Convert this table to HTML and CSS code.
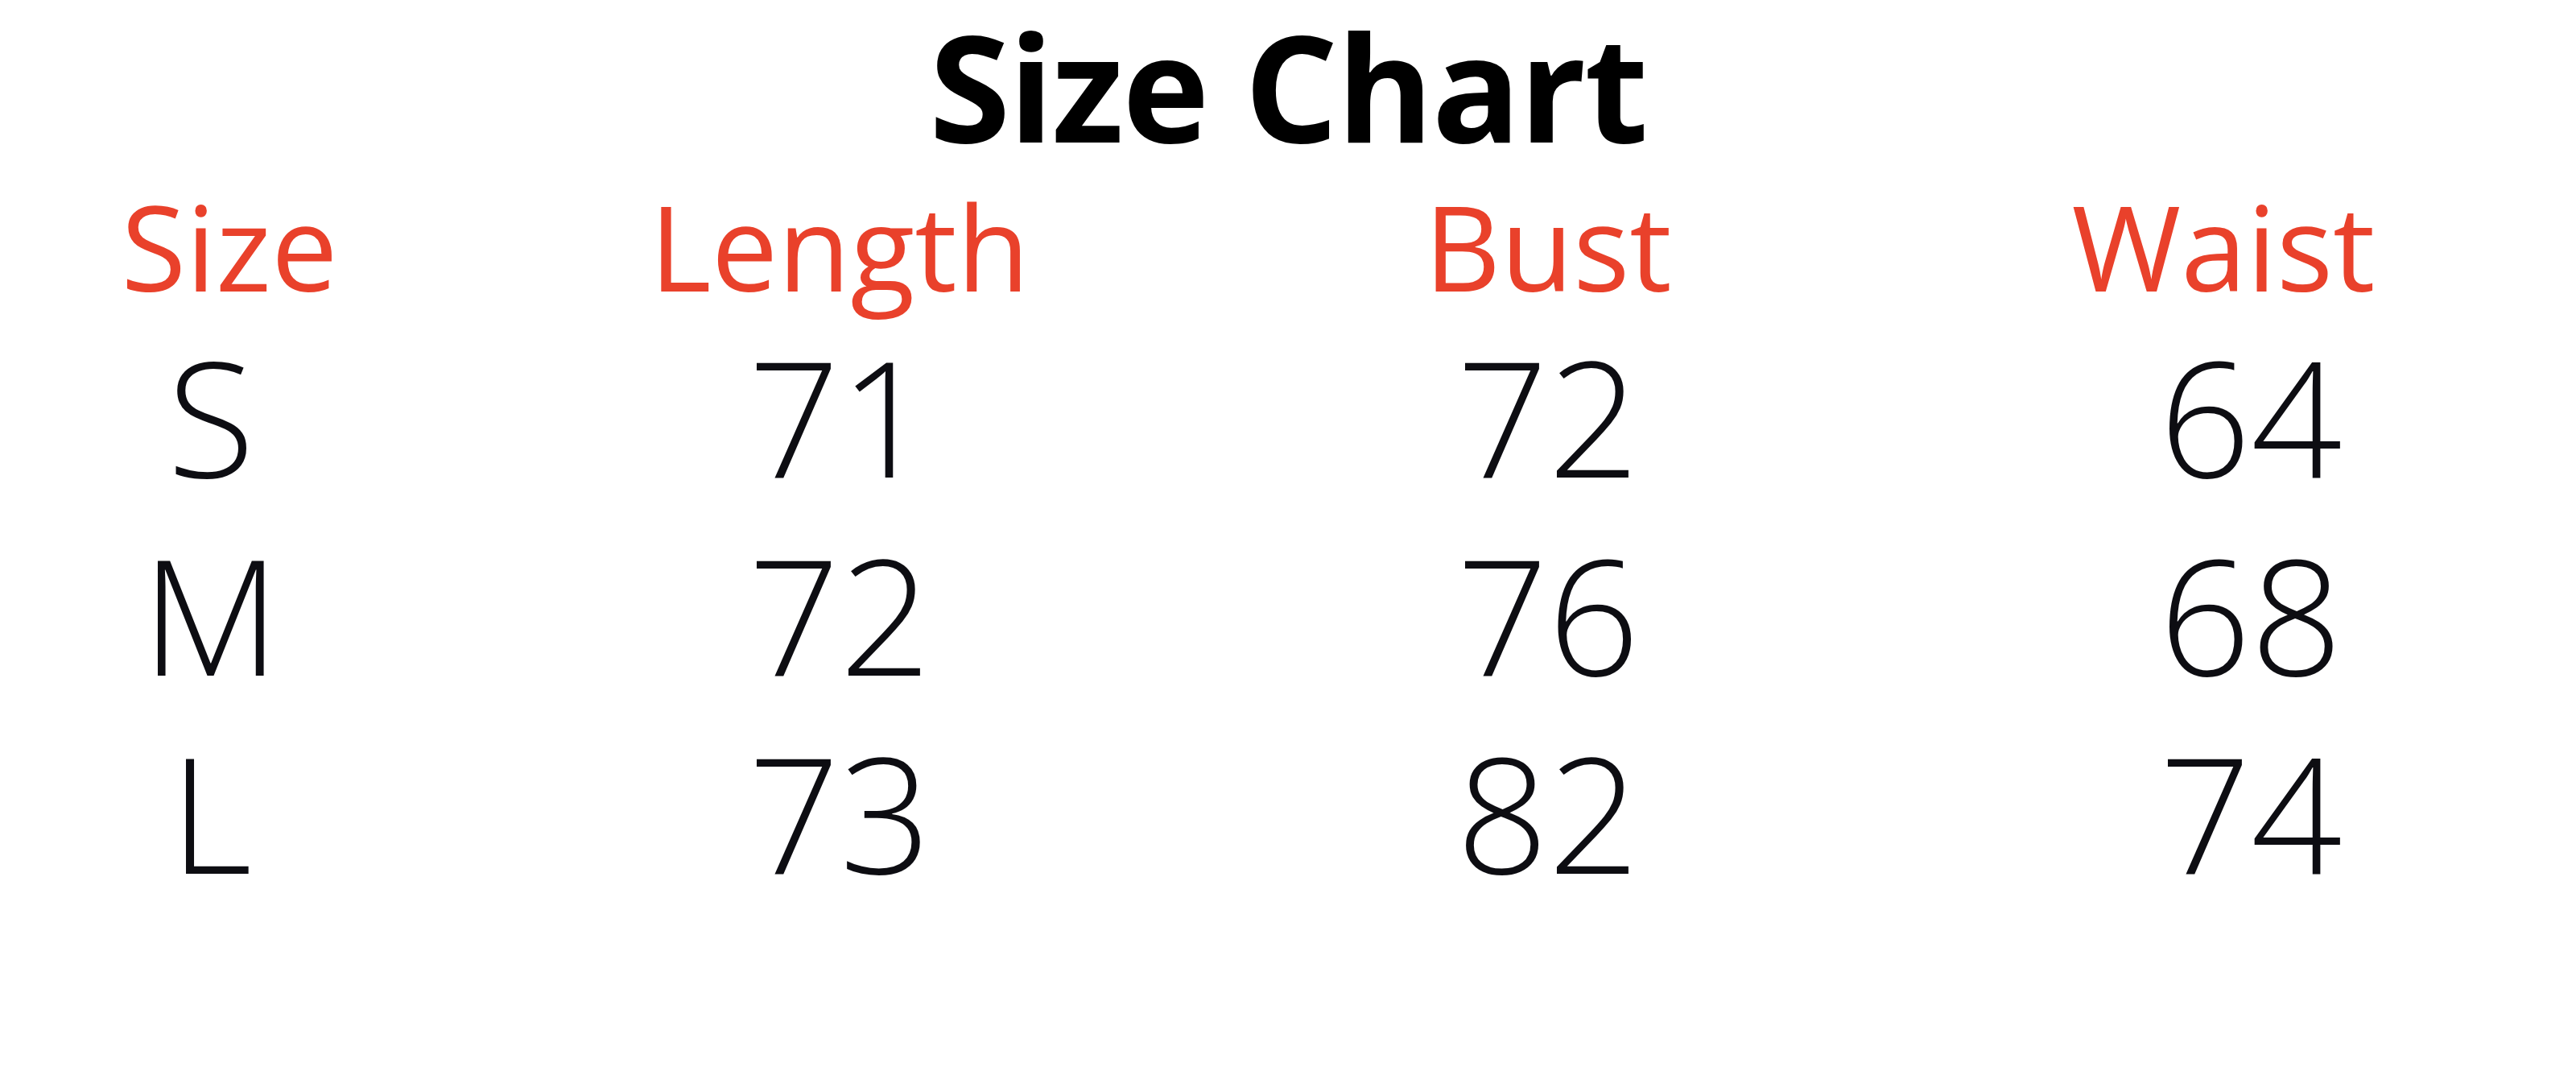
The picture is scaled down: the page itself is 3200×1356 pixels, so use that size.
FILE: index.html
```html
<!DOCTYPE html>
<html lang="en">
<head>
<meta charset="utf-8">
<title>Size Chart</title>
<link rel="stylesheet" href="styles.css">
</head>
<body>
<main class="chart">
  <h1 class="title">Size Chart</h1>
  <div class="grid">
    <div class="cell head c1">Size</div>
    <div class="cell head c2">Length</div>
    <div class="cell head c3">Bust</div>
    <div class="cell head c4">Waist</div>

    <div class="cell val c1">S</div>
    <div class="cell val c2">71</div>
    <div class="cell val c3">72</div>
    <div class="cell val c4">64</div>

    <div class="cell val c1">M</div>
    <div class="cell val c2">72</div>
    <div class="cell val c3">76</div>
    <div class="cell val c4">68</div>

    <div class="cell val c1">L</div>
    <div class="cell val c2">73</div>
    <div class="cell val c3">82</div>
    <div class="cell val c4">74</div>
  </div>
</main>
</body>
</html>
```

FILE: styles.css
```css
html, body {
  margin: 0;
  padding: 0;
  background: #ffffff;
}

body {
  width: 3200px;
  height: 1356px;
  overflow: hidden;
  font-family: "Open Sans", "Noto Sans", "DejaVu Sans", sans-serif;
  color: #111111;
}

.chart {
  display: flex;
  flex-direction: column;
  padding-top: 15px;
}

.title {
  margin: 0;
  font-family: "Open Sans", "Noto Sans", sans-serif;
  font-weight: 700;
  font-size: 183px;
  line-height: 183px;
  text-align: center;
  color: #000000;
  letter-spacing: -2px;
}

.grid {
  display: grid;
  grid-template-columns: 540px 1006px 754px 900px;
  grid-template-rows: 147px 246px 246px 246px;
  row-gap: 0;
  margin-top: 34px;
}

.cell {
  text-align: center;
  white-space: nowrap;
}

.head {
  font-size: 147px;
  line-height: 147px;
  font-weight: 400;
  color: #e9412b;
  margin-bottom: 14px;
}

.val {
  font-size: 199px;
  line-height: 246px;
  font-weight: 300;
  color: #0d0d12;
}

.grid .head {
  margin-bottom: 0;
}

.grid {
  grid-template-rows: 161px 246px 246px 246px;
}

.head.c1 { padding-left: 30px; }
.val.c1 { padding-right: 16px; }
.head.c4 { padding-left: 24px; }
.val.c4 { padding-left: 92px; }
```
